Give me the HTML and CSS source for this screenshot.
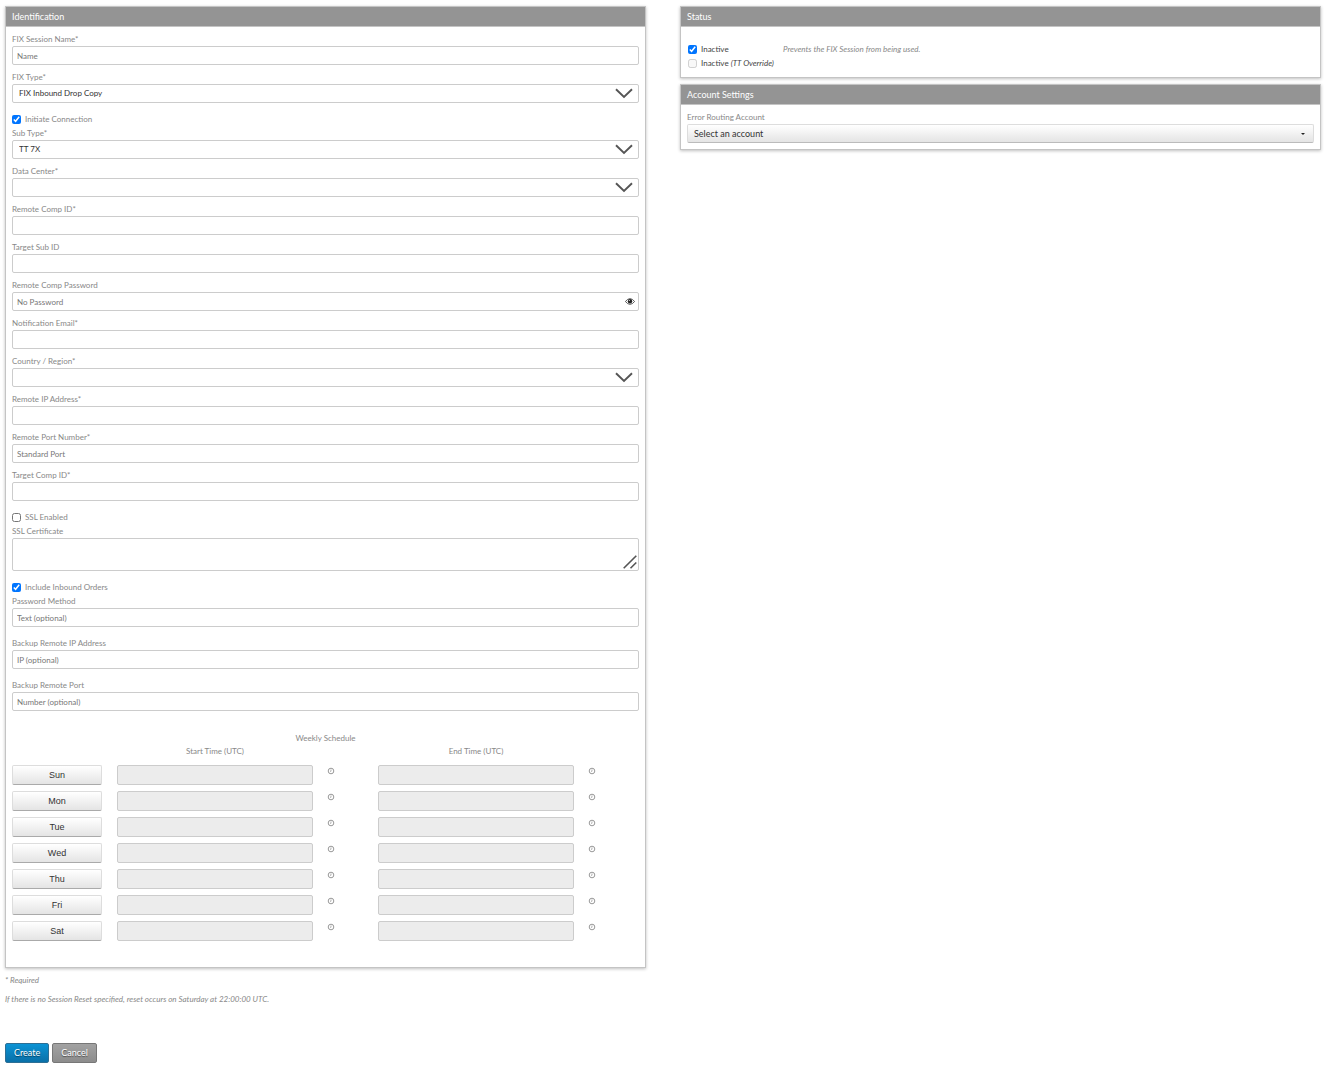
FILE: index.html
```html
<!DOCTYPE html>
<html lang="en">
<head>
    <meta charset="utf-8">
    <title>FIX Session</title>
    <link rel="stylesheet" href="styles.css">
</head>

<body>
    <!-- shared icons -->
    <svg class="sprite" aria-hidden="true">
        <symbol id="chevron" viewBox="0 0 18 11">
            <path d="M1 1.2 L9 9 L17 1.2" fill="none" stroke="#555" stroke-width="1.9"/>
        </symbol>
        <symbol id="clock" viewBox="0 0 8 8">
            <circle cx="4" cy="4" r="2.8" fill="none" stroke="#999" stroke-width="1"/>
            <path d="M4 2.4 V4.3 H3" fill="none" stroke="#999" stroke-width=".7"/>
        </symbol>
    </svg>

    <form>
        <div class="columns">
            <section class="panel">
                <h2>Identification</h2>
                <div class="panel-body">
                    <div class="field">
                        <label for="name">FIX Session Name*</label>
                        <input type="text" id="name" placeholder="Name">
                    </div>
                    <div class="field">
                        <label for="type">FIX Type*</label>
                        <div class="control">
                            <select id="type"><option>FIX Inbound Drop Copy</option></select>
                            <svg class="chevron"><use href="#chevron"/></svg>
                        </div>
                    </div>
                    <div class="check">
                        <input type="checkbox" id="initiate" checked>
                        <label for="initiate">Initiate Connection</label>
                    </div>
                    <div class="field">
                        <label for="subtype">Sub Type*</label>
                        <div class="control">
                            <select id="subtype"><option>TT 7X</option></select>
                            <svg class="chevron"><use href="#chevron"/></svg>
                        </div>
                    </div>
                    <div class="field">
                        <label for="datacenter">Data Center*</label>
                        <div class="control">
                            <select id="datacenter"><option></option></select>
                            <svg class="chevron"><use href="#chevron"/></svg>
                        </div>
                    </div>
                    <div class="field">
                        <label for="remotecomp">Remote Comp ID*</label>
                        <input type="text" id="remotecomp">
                    </div>
                    <div class="field">
                        <label for="targetsub">Target Sub ID</label>
                        <input type="text" id="targetsub">
                    </div>
                    <div class="field">
                        <label for="password">Remote Comp Password</label>
                        <div class="control">
                            <input type="password" id="password" placeholder="No Password">
                            <svg class="eye" viewBox="0 0 10 7">
                                <path d="M.4 3.5 Q5 -2.2 9.6 3.5 Q5 9.2 .4 3.5 Z" fill="#fff" stroke="#333" stroke-width=".8"/>
                                <circle cx="5" cy="3.2" r="2.2" fill="#222"/>
                                <circle cx="4.3" cy="2.4" r=".5" fill="#fff"/>
                            </svg>
                        </div>
                    </div>
                    <div class="field">
                        <label for="email">Notification Email*</label>
                        <input type="email" id="email">
                    </div>
                    <div class="field">
                        <label for="country">Country / Region*</label>
                        <div class="control">
                            <select id="country"><option></option></select>
                            <svg class="chevron"><use href="#chevron"/></svg>
                        </div>
                    </div>
                    <div class="field">
                        <label for="ip">Remote IP Address*</label>
                        <input type="text" id="ip">
                    </div>
                    <div class="field">
                        <label for="port">Remote Port Number*</label>
                        <input type="text" id="port" placeholder="Standard Port">
                    </div>
                    <div class="field">
                        <label for="targetcomp">Target Comp ID*</label>
                        <input type="text" id="targetcomp">
                    </div>
                    <div class="check">
                        <input type="checkbox" id="ssl">
                        <label for="ssl">SSL Enabled</label>
                    </div>
                    <div class="field">
                        <label for="cert">SSL Certificate</label>
                        <div class="control">
                            <textarea id="cert"></textarea>
                            <svg class="grip" viewBox="0 0 14 14">
                                <path d="M.7 13.3 L13.3 .7 M7.5 13.3 L13.3 7.5" stroke="#555" stroke-width="1.6"/>
                            </svg>
                        </div>
                    </div>
                    <div class="check">
                        <input type="checkbox" id="inbound" checked>
                        <label for="inbound">Include Inbound Orders</label>
                    </div>
                    <div class="field wide">
                        <label for="method">Password Method</label>
                        <input type="text" id="method" placeholder="Text (optional)">
                    </div>
                    <div class="field wide">
                        <label for="backupip">Backup Remote IP Address</label>
                        <input type="text" id="backupip" placeholder="IP (optional)">
                    </div>
                    <div class="field wide">
                        <label for="backupport">Backup Remote Port</label>
                        <input type="text" id="backupport" placeholder="Number (optional)">
                    </div>

                    <table class="schedule">
                        <caption>Weekly Schedule</caption>
                        <colgroup>
                            <col class="day"><col><col class="pick"><col><col class="pick">
                        </colgroup>
                        <thead>
                            <tr>
                                <td></td>
                                <th>Start Time (UTC)</th>
                                <td></td>
                                <th>End Time (UTC)</th>
                                <td></td>
                            </tr>
                        </thead>
                        <tbody>
                            <tr>
                                <td><button type="button" class="btn">Sun</button></td>
                                <td><input type="text" aria-label="Sun start" disabled></td>
                                <td><svg class="clock"><use href="#clock"/></svg></td>
                                <td><input type="text" aria-label="Sun end" disabled></td>
                                <td><svg class="clock"><use href="#clock"/></svg></td>
                            </tr>
                            <tr>
                                <td><button type="button" class="btn">Mon</button></td>
                                <td><input type="text" aria-label="Mon start" disabled></td>
                                <td><svg class="clock"><use href="#clock"/></svg></td>
                                <td><input type="text" aria-label="Mon end" disabled></td>
                                <td><svg class="clock"><use href="#clock"/></svg></td>
                            </tr>
                            <tr>
                                <td><button type="button" class="btn">Tue</button></td>
                                <td><input type="text" aria-label="Tue start" disabled></td>
                                <td><svg class="clock"><use href="#clock"/></svg></td>
                                <td><input type="text" aria-label="Tue end" disabled></td>
                                <td><svg class="clock"><use href="#clock"/></svg></td>
                            </tr>
                            <tr>
                                <td><button type="button" class="btn">Wed</button></td>
                                <td><input type="text" aria-label="Wed start" disabled></td>
                                <td><svg class="clock"><use href="#clock"/></svg></td>
                                <td><input type="text" aria-label="Wed end" disabled></td>
                                <td><svg class="clock"><use href="#clock"/></svg></td>
                            </tr>
                            <tr>
                                <td><button type="button" class="btn">Thu</button></td>
                                <td><input type="text" aria-label="Thu start" disabled></td>
                                <td><svg class="clock"><use href="#clock"/></svg></td>
                                <td><input type="text" aria-label="Thu end" disabled></td>
                                <td><svg class="clock"><use href="#clock"/></svg></td>
                            </tr>
                            <tr>
                                <td><button type="button" class="btn">Fri</button></td>
                                <td><input type="text" aria-label="Fri start" disabled></td>
                                <td><svg class="clock"><use href="#clock"/></svg></td>
                                <td><input type="text" aria-label="Fri end" disabled></td>
                                <td><svg class="clock"><use href="#clock"/></svg></td>
                            </tr>
                            <tr>
                                <td><button type="button" class="btn">Sat</button></td>
                                <td><input type="text" aria-label="Sat start" disabled></td>
                                <td><svg class="clock"><use href="#clock"/></svg></td>
                                <td><input type="text" aria-label="Sat end" disabled></td>
                                <td><svg class="clock"><use href="#clock"/></svg></td>
                            </tr>
                        </tbody>
                    </table>
                </div>
            </section>

            <div>
                <section class="panel">
                    <h2>Status</h2>
                    <div class="panel-body status">
                        <div class="status-row">
                            <input type="checkbox" id="inactive" checked>
                            <label for="inactive">Inactive</label>
                            <em class="hint">Prevents the FIX Session from being used.</em>
                        </div>
                        <div class="status-row">
                            <input type="checkbox" id="override" disabled>
                            <label for="override">Inactive <em>(TT Override)</em></label>
                        </div>
                    </div>
                </section>
                <section class="panel">
                    <h2>Account Settings</h2>
                    <div class="panel-body">
                        <div class="field">
                            <label for="account">Error Routing Account</label>
                            <div class="control">
                                <select id="account" class="account"><option>Select an account</option></select>
                                <svg class="caret" viewBox="0 0 4 2"><path d="M0 0 H4 L2 2 Z" fill="#222"/></svg>
                            </div>
                        </div>
                    </div>
                </section>
            </div>
        </div>

        <p class="note">* Required</p>
        <p class="note">If there is no Session Reset specified, reset occurs on Saturday at 22:00:00 UTC.</p>

        <div class="actions">
            <button type="submit" class="action create">Create</button>
            <button type="button" class="action cancel">Cancel</button>
        </div>
    </form>
</body>
</html>
```

FILE: styles.css
```css
* {
    box-sizing: border-box;
}
body {
    margin: 0;
    padding: 6px 8px 18px 5px;
    background: #fff;
    color: #888;
    font: 8px/13px Lato, sans-serif;
}
.sprite {
    display: none;
}
.columns {
    display: grid;
    grid-template-columns: 1fr 1fr;
    gap: 34px;
    align-items: start;
}

/* panels */
.panel {
    border: 1px solid #c4c4c4;
    box-shadow: 0 1px 3px rgba(0, 0, 0, .25);
    margin-bottom: 6px;
}
.panel h2 {
    margin: 0;
    padding: 0 6px;
    background: #949494;
    border-bottom: 1px solid #c4c4c4;
    color: #fff;
    font-size: 9px;
    font-weight: 400;
    line-height: 19px;
}
.panel-body {
    padding: 6px 6px 0;
}

/* fields */
.field {
    margin-bottom: 6px;
}
.field.wide {
    margin-bottom: 10px;
}
.field label {
    display: block;
}
.control {
    position: relative;
}
input, select, textarea, button {
    font: 8px/13px Lato, sans-serif;
    margin: 0;
}
input:not([type=checkbox]), select, textarea {
    -webkit-appearance: none;
    appearance: none;
    display: block;
    width: 100%;
    height: 19px;
    padding: 0 4px;
    border: 1px solid #ccc;
    border-radius: 2px;
    background: #fff;
    color: #333;
    outline: none;
}
select {
    padding: 0 6px;
}
textarea {
    height: 33px;
    resize: none;
}
::placeholder {
    color: #777;
}
input[type=checkbox] {
    width: 9px;
    height: 9px;
    flex: none;
}
.chevron {
    position: absolute;
    right: 6px;
    top: 4px;
    width: 18px;
    height: 11px;
    pointer-events: none;
}
.eye {
    position: absolute;
    right: 4px;
    top: 6px;
    width: 10px;
    height: 7px;
}
.grip {
    position: absolute;
    right: 2px;
    bottom: 2px;
    width: 14px;
    height: 14px;
    pointer-events: none;
}
.check {
    display: flex;
    align-items: center;
    gap: 4px;
    height: 18px;
    padding-top: 2px;
}

/* weekly schedule */
.schedule {
    width: 100%;
    margin: 21px 0 20px;
    table-layout: fixed;
    border-collapse: collapse;
}
.schedule th, .schedule td {
    padding: 0;
    font-weight: 400;
    vertical-align: top;
}
.schedule thead th {
    padding-bottom: 7px;
}
.schedule tbody td {
    height: 26px;
}
.schedule .day {
    width: 105px;
}
.schedule .pick {
    width: 65px;
}
.schedule input:disabled {
    height: 20px;
    background: #ececec;
}
.btn {
    display: block;
    width: 90px;
    height: 20px;
    padding: 0;
    border: 1px solid #ddd;
    border-bottom-color: #aaa;
    border-radius: 2px;
    background: linear-gradient(#fff, #e4e4e4);
    color: #333;
    font: 9px/18px "Liberation Sans", Arial, sans-serif;
}
.clock {
    display: block;
    width: 8px;
    height: 8px;
    margin: 2px 0 0 14px;
}

/* right column */
.status {
    padding: 15px 7px 7px;
    color: #444;
}
.status-row {
    display: grid;
    grid-template-columns: 9px 78px 1fr;
    column-gap: 4px;
    align-items: center;
    height: 14px;
    white-space: nowrap;
}
.hint {
    color: #888;
}
.account {
    border-color: #ddd;
    border-bottom-color: #bbb;
    background: linear-gradient(#fff, #e4e4e4);
    font-size: 9px;
}
.caret {
    position: absolute;
    right: 9px;
    top: 9px;
    width: 4px;
    height: 2px;
    pointer-events: none;
}

/* footer */
.note {
    margin: 0 0 6px;
    font-style: italic;
}
.actions {
    display: flex;
    gap: 3px;
    margin-top: 37px;
}
.action {
    height: 20px;
    padding: 0 8px;
    border: 1px solid #777;
    border-radius: 2px;
    color: #fff;
    font-size: 9px;
    line-height: 18px;
    text-shadow: 0 1px 1px rgba(0, 0, 0, .5);
}
.create {
    border-color: #2d6f95;
    background: linear-gradient(#0b93d5, #0a70a8);
}
.cancel {
    background: linear-gradient(#a2a2a2, #8c8c8c);
}
```
